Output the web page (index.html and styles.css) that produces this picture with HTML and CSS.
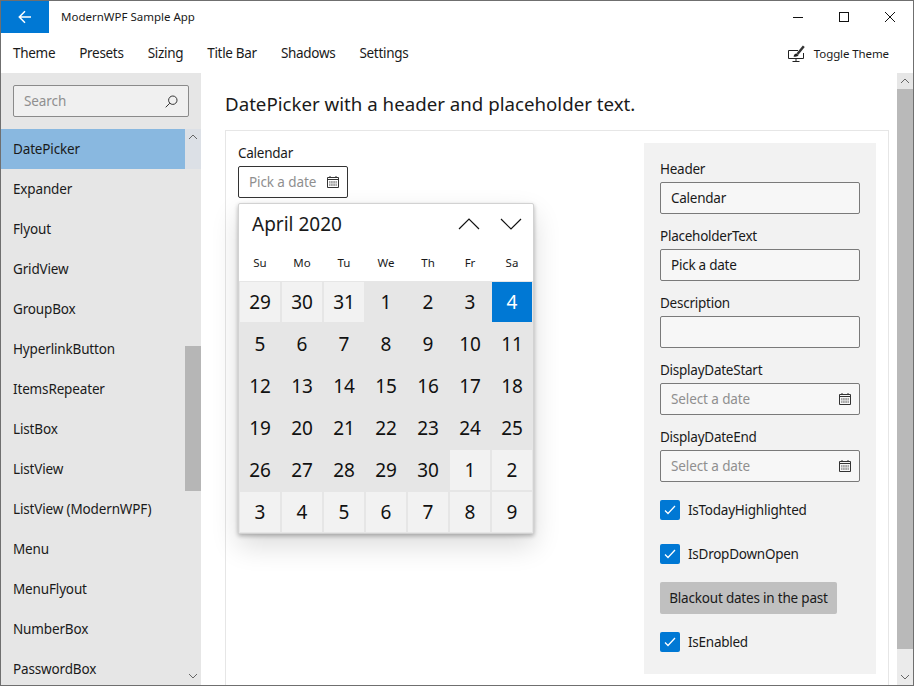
FILE: index.html
```html
<!DOCTYPE html>
<html lang="en">
<head>
  <meta charset="UTF-8">
  <meta name="viewport" content="width=device-width, initial-scale=1.0">
  <title>ModernWPF Sample App</title>
  <link rel="stylesheet" href="styles.css">
</head>
<body>
  <div class="window">
    <div class="titlebar">
      <div class="back">
        <svg width="16" height="16" viewBox="0 0 16 16"><path d="M14 8H2.500M8 2.300 2.300 8 8 13.700" fill="none" stroke="#fff" stroke-width="1.500"/></svg>
      </div>
      <div class="app-title">ModernWPF Sample App</div>
      <div class="caption">
        <svg width="12" height="12" viewBox="0 0 12 12"><path d="M1 6.500H11" stroke="#111" fill="none"/></svg>
        <svg width="12" height="12" viewBox="0 0 12 12"><rect x="1.500" y="1.500" width="9" height="9" stroke="#111" fill="none"/></svg>
        <svg width="12" height="12" viewBox="0 0 12 12"><path d="M1 1 11 11M11 1 1 11" stroke="#111" fill="none"/></svg>
      </div>
    </div>

    <div class="menubar">
      <span>Theme</span>
      <span>Presets</span>
      <span>Sizing</span>
      <span>Title Bar</span>
      <span>Shadows</span>
      <span>Settings</span>
      <div class="toggle-theme">
        <svg width="18" height="17" viewBox="0 0 18 17"><path d="M10 5.500H.5V13.500H15.500V8M8 13.500V16M4.500 16.500H11.500" fill="none" stroke="#222"/><path d="M9.500 9 15.800 1.200" fill="none" stroke="#333" stroke-width="2.400"/><path d="M5.500 11.500C6 9.500 7 8.500 8.500 8.500L10.500 10C10 11.500 8 12 5.500 11.500Z" fill="#222"/></svg>
        Toggle Theme
      </div>
    </div>

    <div class="content">
      <div class="sidebar">
        <div class="search">
          <span>Search</span>
          <svg width="13" height="13" viewBox="0 0 13 13"><circle cx="7.800" cy="5.200" r="4.200" fill="none" stroke="#333"/><path d="M4.800 8.200 .7 12.300" stroke="#333" fill="none"/></svg>
        </div>
        <div class="nav">
          <div class="nav-list">
            <div class="nav-item selected">DatePicker</div>
            <div class="nav-item">Expander</div>
            <div class="nav-item">Flyout</div>
            <div class="nav-item">GridView</div>
            <div class="nav-item">GroupBox</div>
            <div class="nav-item">HyperlinkButton</div>
            <div class="nav-item">ItemsRepeater</div>
            <div class="nav-item">ListBox</div>
            <div class="nav-item">ListView</div>
            <div class="nav-item">ListView (ModernWPF)</div>
            <div class="nav-item">Menu</div>
            <div class="nav-item">MenuFlyout</div>
            <div class="nav-item">NumberBox</div>
            <div class="nav-item">PasswordBox</div>
          </div>
          <div class="nav-scroll">
            <div class="nav-scroll-top">
              <svg width="10" height="6" viewBox="0 0 10 6"><path d="M1 5 5 1 9 5" fill="none" stroke="#666"/></svg>
            </div>
            <div class="nav-thumb"></div>
            <svg class="nav-down" width="10" height="6" viewBox="0 0 10 6"><path d="M1 1 5 5 9 1" fill="none" stroke="#666"/></svg>
          </div>
        </div>
      </div>

      <div class="main">
        <h1>DatePicker with a header and placeholder text.</h1>
        <div class="card">
          <div class="demo">
            <div class="field-label">Calendar</div>
            <div class="input picker-small">
              <span class="placeholder">Pick a date</span>
              <svg class="cal-icon" width="12" height="12" viewBox="0 0 12 12"><path d="M.5 1.500H11.500V11.500H.5ZM1 3.500H11M3 0V2M9 0V2" fill="none" stroke="#333"/><path d="M2 5H10V10H2Z" fill="#a8a8a8"/><path d="M3.500 5V10M6 5V10M8.500 5V10M2 7.500H10" fill="none" stroke="#e4e4e4" stroke-width=".6"/></svg>
            </div>

            <div class="calendar">
              <div class="cal-head">
                <span class="cal-month">April 2020</span>
                <svg width="22" height="12" viewBox="0 0 22 12"><path d="M1 11 11 1 21 11" fill="none" stroke="#111" stroke-width="1.200"/></svg>
                <svg width="22" height="12" viewBox="0 0 22 12"><path d="M1 1 11 11 21 1" fill="none" stroke="#111" stroke-width="1.200"/></svg>
              </div>
              <div class="cal-week">
                <span>Su</span><span>Mo</span><span>Tu</span><span>We</span><span>Th</span><span>Fr</span><span>Sa</span>
              </div>
              <div class="cal-grid">
                <span class="out">29</span><span class="out">30</span><span class="out">31</span><span>1</span><span>2</span><span>3</span><span class="today">4</span>
                <span>5</span><span>6</span><span>7</span><span>8</span><span>9</span><span>10</span><span>11</span>
                <span>12</span><span>13</span><span>14</span><span>15</span><span>16</span><span>17</span><span>18</span>
                <span>19</span><span>20</span><span>21</span><span>22</span><span>23</span><span>24</span><span>25</span>
                <span>26</span><span>27</span><span>28</span><span>29</span><span>30</span><span class="out">1</span><span class="out">2</span>
                <span class="out">3</span><span class="out">4</span><span class="out">5</span><span class="out">6</span><span class="out">7</span><span class="out">8</span><span class="out">9</span>
              </div>
            </div>
          </div>

          <div class="options">
            <div>
              <div class="field-label">Header</div>
              <div class="input">Calendar</div>
            </div>
            <div>
              <div class="field-label">PlaceholderText</div>
              <div class="input">Pick a date</div>
            </div>
            <div>
              <div class="field-label">Description</div>
              <div class="input"></div>
            </div>
            <div>
              <div class="field-label">DisplayDateStart</div>
              <div class="input">
                <span class="placeholder">Select a date</span>
                <svg class="cal-icon" width="12" height="12" viewBox="0 0 12 12"><path d="M.5 1.500H11.500V11.500H.5ZM1 3.500H11M3 0V2M9 0V2" fill="none" stroke="#333"/><path d="M2 5H10V10H2Z" fill="#a8a8a8"/><path d="M3.500 5V10M6 5V10M8.500 5V10M2 7.500H10" fill="none" stroke="#e4e4e4" stroke-width=".6"/></svg>
              </div>
            </div>
            <div>
              <div class="field-label">DisplayDateEnd</div>
              <div class="input">
                <span class="placeholder">Select a date</span>
                <svg class="cal-icon" width="12" height="12" viewBox="0 0 12 12"><path d="M.5 1.500H11.500V11.500H.5ZM1 3.500H11M3 0V2M9 0V2" fill="none" stroke="#333"/><path d="M2 5H10V10H2Z" fill="#a8a8a8"/><path d="M3.500 5V10M6 5V10M8.500 5V10M2 7.500H10" fill="none" stroke="#e4e4e4" stroke-width=".6"/></svg>
              </div>
            </div>
            <div class="check">
              <span class="box"><svg width="12" height="10" viewBox="0 0 12 10"><path d="M1 5.500 4 8.500 11 1" fill="none" stroke="#fff" stroke-width="1.300"/></svg></span>
              IsTodayHighlighted
            </div>
            <div class="check">
              <span class="box"><svg width="12" height="10" viewBox="0 0 12 10"><path d="M1 5.500 4 8.500 11 1" fill="none" stroke="#fff" stroke-width="1.300"/></svg></span>
              IsDropDownOpen
            </div>
            <div class="blackout">Blackout dates in the past</div>
            <div class="check">
              <span class="box"><svg width="12" height="10" viewBox="0 0 12 10"><path d="M1 5.500 4 8.500 11 1" fill="none" stroke="#fff" stroke-width="1.300"/></svg></span>
              IsEnabled
            </div>
          </div>
        </div>
      </div>

      <div class="main-scroll">
        <div class="main-scroll-up">
          <svg width="10" height="6" viewBox="0 0 10 6"><path d="M1 5 5 1 9 5" fill="none" stroke="#666"/></svg>
        </div>
        <div class="main-thumb"></div>
        <div class="main-scroll-down">
          <svg width="10" height="6" viewBox="0 0 10 6"><path d="M1 1 5 5 9 1" fill="none" stroke="#666"/></svg>
        </div>
      </div>
    </div>
  </div>
</body>
</html>
```

FILE: styles.css
```css
* {
  box-sizing: border-box;
}

html, body {
  margin: 0;
  padding: 0;
  overflow: hidden;
}

body {
  font-family: "Noto Sans", "Open Sans", sans-serif;
  font-size: 13.5px;
  letter-spacing: -0.25px;
  color: #1a1a1a;
  background-color: #fff;
}

.window {
  width: 914px;
  height: 686px;
  border: 1px solid #6f6f6f;
  display: flex;
  flex-direction: column;
  overflow: hidden;
}

/* title bar */
.titlebar {
  height: 32px;
  display: flex;
  align-items: center;
  flex-shrink: 0;
}

.back {
  width: 48px;
  height: 32px;
  background-color: #0078d4;
  display: flex;
  align-items: center;
  justify-content: center;
}

.app-title {
  margin-left: 12px;
  margin-bottom: 2px;
  font-size: 11.5px;
  letter-spacing: 0;
}

.caption {
  margin-left: auto;
  display: flex;
  gap: 34px;
  padding-right: 17px;
}

/* menu */
.menubar {
  height: 40px;
  display: flex;
  align-items: center;
  gap: 24px;
  padding: 0 24px 0 12px;
  letter-spacing: -0.3px;
  flex-shrink: 0;
}

.toggle-theme {
  margin-left: auto;
  display: flex;
  align-items: center;
  gap: 8px;
  font-size: 11.5px;
  letter-spacing: -0.1px;
}

.content {
  flex: 1;
  display: flex;
  min-height: 0;
}

/* left navigation */
.sidebar {
  width: 200px;
  background-color: #e6e6e6;
  flex-shrink: 0;
  display: flex;
  flex-direction: column;
  overflow: hidden;
}

.search {
  margin: 12px;
  height: 32px;
  border: 1px solid #8a8a8a;
  border-radius: 2px;
  background-color: #f0f0f0;
  display: flex;
  align-items: center;
  justify-content: space-between;
  padding: 0 10px;
  color: #8f8f8f;
  letter-spacing: -0.1px;
  flex-shrink: 0;
}

.nav {
  flex: 1;
  display: flex;
  min-height: 0;
}

.nav-list {
  width: 184px;
  flex-shrink: 0;
}

.nav-item {
  height: 40px;
  line-height: 40px;
  padding-left: 12px;
  letter-spacing: -0.15px;
  white-space: nowrap;
}

.nav-item.selected {
  background-color: #89b8e0;
}

.nav-scroll {
  width: 16px;
  position: relative;
}

.nav-scroll-top {
  height: 40px;
  background-color: #dce0e6;
  display: flex;
  justify-content: center;
  padding-top: 5px;
}

.nav-thumb {
  width: 16px;
  height: 145px;
  margin-top: 177px;
  background-color: #b6b6b6;
}

.nav-down {
  position: absolute;
  left: 3px;
  bottom: 6px;
}

/* main area */
.main {
  flex: 1;
  min-width: 0;
  padding: 17px 8px 0 24px;
  overflow: hidden;
}

h1 {
  margin: 0 0 12px;
  font-size: 18.7px;
  font-weight: 400;
  line-height: 27px;
  padding-bottom: 1px;
  letter-spacing: 0;
  white-space: nowrap;
}

.card {
  border: 1px solid #e6e6e6;
  padding: 12px;
  display: flex;
  justify-content: space-between;
  align-items: flex-start;
}

.demo {
  position: relative;
}

.field-label {
  height: 19px;
  line-height: 21px;
  margin-bottom: 4px;
}

.input {
  height: 32px;
  width: 200px;
  border: 1px solid #7a7a7a;
  border-radius: 2px;
  background-color: #f7f7f7;
  display: flex;
  align-items: center;
  justify-content: space-between;
  padding: 0 8px 0 10px;
}

.picker-small {
  width: 110px;
  border-color: #333;
  background-color: #fff;
}

.placeholder {
  color: #8f8f8f;
  letter-spacing: -0.1px;
}

.cal-icon {
  flex-shrink: 0;
}

/* calendar popup */
.calendar {
  position: absolute;
  left: 0;
  top: 60px;
  width: 296px;
  height: 331px;
  border: 1px solid #d2d2d2;
  border-radius: 2px;
  background-color: #fff;
  box-shadow: 0 2px 4px rgba(0, 0, 0, 0.28), 0 12px 28px rgba(0, 0, 0, 0.14);
  letter-spacing: 0;
  z-index: 2;
}

.cal-head {
  height: 41px;
  display: flex;
  align-items: center;
  padding: 0 11px 2px 13px;
  gap: 20px;
}

.cal-month {
  font-size: 19px;
  margin-right: auto;
}

.cal-week {
  height: 36px;
  display: grid;
  grid-template-columns: repeat(7, 42px);
  padding: 0 0 2px 0;
  align-items: center;
  text-align: center;
  font-size: 11.5px;
}

.cal-grid {
  display: grid;
  grid-template-columns: repeat(7, 40px);
  grid-auto-rows: 40px;
  gap: 2px;
  padding: 1px;
  background-color: #e6e6e6;
}

.cal-grid span {
  display: flex;
  align-items: center;
  justify-content: center;
  font-size: 19px;
  color: #111;
}

.cal-grid .out {
  background-color: #f2f2f2;
}

.cal-grid .today {
  background-color: #0078d4;
  color: #fff;
}

/* right option panel */
.options {
  width: 232px;
  padding: 16px;
  background-color: #f2f2f2;
  display: flex;
  flex-direction: column;
  gap: 12px;
}

.check {
  height: 32px;
  display: flex;
  align-items: center;
  gap: 8px;
}

.box {
  width: 20px;
  height: 20px;
  border-radius: 2px;
  background-color: #0078d4;
  display: flex;
  align-items: center;
  justify-content: center;
}

.blackout {
  width: 177px;
  height: 32px;
  line-height: 32px;
  text-align: center;
  white-space: nowrap;
  border-radius: 2px;
  background-color: #c0c0c0;
  letter-spacing: -0.2px;
}

/* outer scrollbar */
.main-scroll {
  width: 16px;
  flex-shrink: 0;
  display: flex;
  flex-direction: column;
}

.main-scroll-up {
  height: 16px;
  background-color: #e6e6e6;
  display: flex;
  align-items: center;
  justify-content: center;
}

.main-thumb {
  height: 560px;
  background-color: #b9b9b9;
}

.main-scroll-down {
  flex: 1;
  background-color: #ebebeb;
  display: flex;
  align-items: flex-end;
  justify-content: center;
  padding-bottom: 5px;
}
```
